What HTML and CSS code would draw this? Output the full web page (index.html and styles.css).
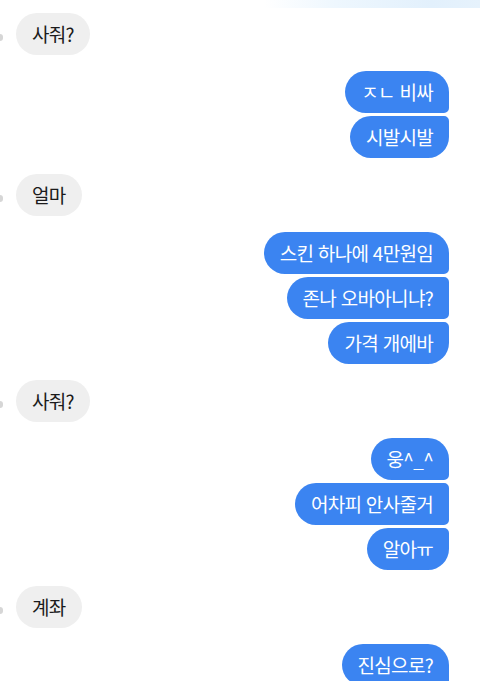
FILE: index.html
```html
<!DOCTYPE html>
<html lang="ko">
<head>
  <meta charset="UTF-8">
  <meta name="viewport" content="width=device-width, initial-scale=1.0">
  <title>대화</title>
  <link rel="stylesheet" href="styles.css">
</head>
<body>
  <div class="top-fade"></div>

  <main class="chat">
    <div class="group them">
      <div class="row"><span class="avatar"></span><p class="bubble">사줘?</p></div>
    </div>

    <div class="group me">
      <p class="bubble">ㅈㄴ 비싸</p>
      <p class="bubble">시발시발</p>
    </div>

    <div class="group them">
      <div class="row"><span class="avatar"></span><p class="bubble">얼마</p></div>
    </div>

    <div class="group me">
      <p class="bubble">스킨 하나에 4만원임</p>
      <p class="bubble">존나 오바아니냐?</p>
      <p class="bubble">가격 개에바</p>
    </div>

    <div class="group them">
      <div class="row"><span class="avatar"></span><p class="bubble">사줘?</p></div>
    </div>

    <div class="group me">
      <p class="bubble">웅^_^</p>
      <p class="bubble">어차피 안사줄거</p>
      <p class="bubble">알아ㅠ</p>
    </div>

    <div class="group them">
      <div class="row"><span class="avatar"></span><p class="bubble">계좌</p></div>
    </div>

    <div class="group me">
      <p class="bubble">진심으로?</p>
    </div>
  </main>
</body>
</html>
```

FILE: styles.css
```css
body { margin: 0; background: #fff; font-family: "Noto Sans CJK KR", "Noto Sans", sans-serif;
  overflow: hidden; }

.top-fade { height: 8px;
  background: linear-gradient(90deg, #fff 0%, #fff 55%, #eef7fe 70%, #e2f0fc 90%, #e6f2fc 100%); }

.chat { display: flex; flex-direction: column; gap: 16px; padding: 5px 31px 0 0; }

.group { display: flex; flex-direction: column; gap: 3px; }
.group.me { align-items: flex-end; }
.group.them { align-items: flex-start; }

.row { display: flex; align-items: center; gap: 13px; }
.avatar { width: 3px; height: 7px; margin-top: 6px; background: #d6d6d6;
  border-radius: 0 3px 3px 0; }

.bubble { margin: 0; height: 42px; line-height: 42px; padding: 0 16px;
  font-size: 19px; letter-spacing: -0.7px; border-radius: 21px; white-space: nowrap; }

.them .bubble { background: #efefef; color: #1b1b1b; }

.me .bubble { background: #3b84f1; color: #fff; border-radius: 21px 5px 5px 21px; }
.me .bubble:first-child { border-top-right-radius: 21px; }
.me .bubble:last-child { border-bottom-right-radius: 21px; }
.me .bubble:only-child { border-radius: 21px 21px 5px 21px; }
```
